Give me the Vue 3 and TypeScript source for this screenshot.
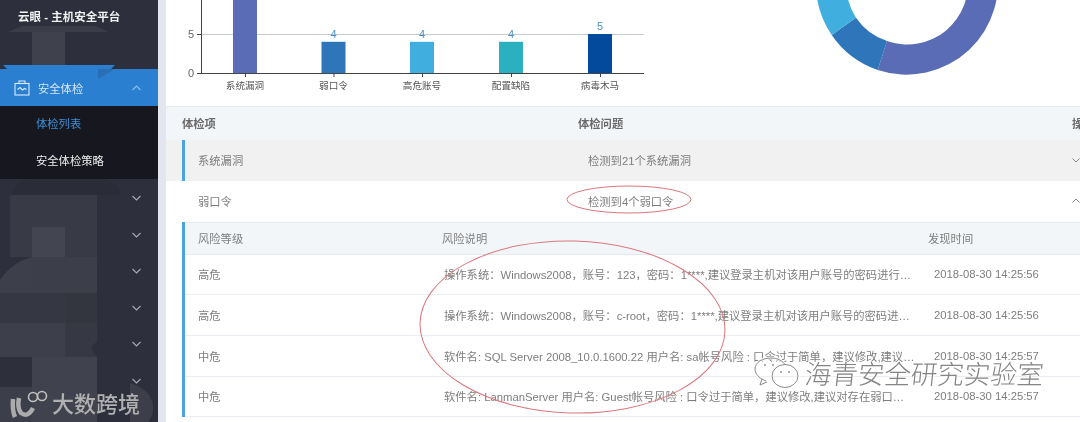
<template>
  <div class="page">
    <aside class="sidebar">
      <svg class="mosaic" width="158" height="422" viewBox="0 0 158 422" aria-hidden="true">
        <path d="M8 32 L22 26 H96 L108 32 Z" fill="#3a3c47" />
        <rect x="32" y="32" width="33" height="34" fill="#3f414c" />
        <path d="M3 65 H115 L111 69 H7 Z" fill="#2b7fd0" />
        <path d="M12 193 Q16 179 32 179 H102 Q116 180 120 193 V195 H12 Z" fill="#2a2c37" />
        <rect x="10" y="195" width="87" height="62" fill="#383a46" />
        <rect x="32" y="227" width="33" height="30" fill="#434551" />
        <path d="M0 280 Q12 262 32 257 V293 H0 Z" fill="#3d3f4a" />
        <rect x="32" y="257" width="65" height="36" fill="#3c3e4a" />
        <rect x="0" y="293" width="66" height="30" fill="#353743" />
        <rect x="66" y="293" width="31" height="30" fill="#33353f" />
        <rect x="0" y="323" width="65" height="34" fill="#3d3f4a" />
        <path d="M65 323 H97 V341 L91 348 L97 357 H65 Z" fill="#363843" />
        <rect x="0" y="357" width="32" height="30" fill="#2d2f3b" />
        <rect x="32" y="357" width="65" height="65" fill="#40424d" />
        <rect x="0" y="387" width="32" height="35" fill="#3c3e4a" />
        <path d="M130 383 Q153 390 153 408 Q153 416 148 422 H130 Z" fill="#3d3e49" />
      </svg>

      <div class="brand">云眼 - 主机安全平台</div>

      <div class="menu-active">
        <svg class="menu-icon" width="16" height="16" viewBox="0 0 16 16" fill="none" stroke="#d8ecfb" stroke-width="1.1">
          <rect x="1" y="3.5" width="14" height="11.5" />
          <path d="M5 3.5 V1 H11 V3.5" />
          <path d="M3.5 9.5 L6 7.5 L8.5 10 L10.5 8.5 L12.5 9.5" />
        </svg>
        <span>安全体检</span>
        <svg class="chevron" width="9" height="6" viewBox="0 0 9 6" fill="none" stroke="#8fbde8" stroke-width="1.1">
          <path d="M0.5 5 L4.5 1 L8.5 5" />
        </svg>
      </div>

      <div class="submenu">
        <div class="sub-item sub-item-on">体检列表</div>
        <div class="sub-item">安全体检策略</div>
      </div>

      <div v-for="n in 6" :key="n" class="menu-closed">
        <svg class="chevron" width="9" height="6" viewBox="0 0 9 6" fill="none" stroke="#a9abb3" stroke-width="1.1">
          <path d="M0.5 1 L4.5 5 L8.5 1" />
        </svg>
      </div>
    </aside>

    <main class="content">
      <section class="chart-card">
        <svg class="chart" width="914" height="106" viewBox="166 0 914 106">
          <line x1="201" y1="34.5" x2="644" y2="34.5" stroke="#c8cad2" />
          <line x1="201" y1="73.5" x2="644" y2="73.5" stroke="#444" />
          <line x1="201.5" y1="0" x2="201.5" y2="74" stroke="#444" />
          <line x1="197" y1="34.5" x2="201" y2="34.5" stroke="#444" />
          <line x1="197" y1="73.5" x2="201" y2="73.5" stroke="#444" />
          <text x="191" y="38" class="axis-num">5</text>
          <text x="191" y="77" class="axis-num">0</text>
          <g v-for="bar in bars" :key="bar.name">
            <rect
              :x="bar.x - 12"
              :y="73 - bar.value * 7.8"
              width="24"
              :height="bar.value * 7.8"
              :fill="bar.color"
            />
            <line :x1="bar.x + 0.5" y1="73" :x2="bar.x + 0.5" y2="77" stroke="#444" />
            <text v-if="bar.value < 10" :x="bar.x" :y="69 - bar.value * 7.8" class="bar-value">{{ bar.value }}</text>
            <text :x="bar.x" y="88.5" class="bar-name">{{ bar.name }}</text>
          </g>
          <path d="M995 -40 A91.5 91.5 0 0 1 877.7 70 L887 41 A60.5 60.5 0 0 0 967 -26 Z" fill="#5a6cb5" />
          <path d="M877.7 70 A91.5 91.5 0 0 1 831.7 35 L856 17.7 A60.5 60.5 0 0 0 887 41 Z" fill="#2e75ba" />
          <path d="M831.7 35 A91.5 91.5 0 0 1 816 -20 L846.5 -20 A60.5 60.5 0 0 0 856 17.7 Z" fill="#40aede" />
        </svg>
      </section>

      <div class="head-row">
        <span>体检项</span>
        <span>体检问题</span>
        <span>操作</span>
      </div>

      <div class="check-row check-row-open">
        <span>系统漏洞</span>
        <span>检测到21个系统漏洞</span>
        <svg width="8" height="5" viewBox="0 0 8 5" fill="none" stroke="#888" stroke-width="1">
          <path d="M0.5 0.5 L4 4 L7.5 0.5" />
        </svg>
      </div>
      <div class="check-row">
        <span>弱口令</span>
        <span>检测到4个弱口令</span>
        <svg width="8" height="5" viewBox="0 0 8 5" fill="none" stroke="#888" stroke-width="1">
          <path d="M0.5 4.5 L4 1 L7.5 4.5" />
        </svg>
      </div>

      <div class="risk-table">
        <div class="risk-head">
          <span>风险等级</span>
          <span>风险说明</span>
          <span>发现时间</span>
        </div>
        <div v-for="risk in risks" :key="risk.desc" class="risk-row">
          <span>{{ risk.level }}</span>
          <span class="risk-desc">{{ risk.desc }}</span>
          <span>{{ risk.time }}</span>
        </div>
      </div>
    </main>

    <svg class="marks" width="1080" height="422" viewBox="0 0 1080 422" aria-hidden="true">
      <ellipse cx="629" cy="199.5" rx="62" ry="13.5" fill="none" stroke="#d9777d" />
      <ellipse cx="572.5" cy="327" rx="152.5" ry="86" fill="none" stroke="#d9777d" transform="rotate(1.5 572.5 327)" />
      <g fill="none" stroke="#fff" stroke-width="3" opacity="0.8">
        <path d="M766 381 C758 378 755 373 755 369 C755 362 763 358 771 358 C778 358 783 361 785 365" />
        <ellipse cx="785" cy="376" rx="13" ry="11.5" />
      </g>
      <g fill="none" stroke="#8b8b8b" stroke-width="1">
        <path d="M766 381 C758 378 755 373 755 369 C755 362 763 358 771 358 C778 358 783 361 785 365" />
        <path d="M762 379 L760 385 L767 382" />
        <ellipse cx="785" cy="376" rx="13" ry="11.5" />
      </g>
      <g fill="#8b8b8b">
        <circle cx="781" cy="372" r="0.9" />
        <circle cx="789" cy="372" r="0.9" />
        <circle cx="765" cy="365" r="0.9" />
        <circle cx="773" cy="365" r="0.9" />
      </g>
      <path d="M13 399 Q12 410 15 417 M19 398 Q17 408 21 413 Q28 418 33 408" fill="none" stroke="#ababab" stroke-width="4.5" />
      <circle cx="33" cy="397" r="4.5" fill="none" stroke="#c0c0c0" stroke-width="1.6" />
      <circle cx="42" cy="396" r="4.5" fill="none" stroke="#c0c0c0" stroke-width="1.6" />
    </svg>
    <div class="mark-left">大数跨境</div>
    <div class="mark-right">海青安全研究实验室</div>
  </div>
</template>

<script setup lang="ts">
interface Bar {
  name: string;
  value: number;
  x: number;
  color: string;
}

interface Risk {
  level: string;
  desc: string;
  time: string;
}

const bars: Bar[] = [
  { name: "系统漏洞", value: 21, x: 245, color: "#5a6cb5" },
  { name: "弱口令", value: 4, x: 333.5, color: "#2e75ba" },
  { name: "高危账号", value: 4, x: 422, color: "#40aede" },
  { name: "配置缺陷", value: 4, x: 511, color: "#2ab0bf" },
  { name: "病毒木马", value: 5, x: 600, color: "#034a9d" },
];

const risks: Risk[] = [
  {
    level: "高危",
    desc: "操作系统：Windows2008，账号：123，密码：1****,建议登录主机对该用户账号的密码进行修改，提高密码强度",
    time: "2018-08-30 14:25:56",
  },
  {
    level: "高危",
    desc: "操作系统：Windows2008，账号：c-root，密码：1****,建议登录主机对该用户账号的密码进行修改，提高密码强度",
    time: "2018-08-30 14:25:56",
  },
  {
    level: "中危",
    desc: "软件名: SQL Server 2008_10.0.1600.22 用户名: sa帐号风险 : 口令过于简单，建议修改,建议对存在弱口令的账号进行处理",
    time: "2018-08-30 14:25:57",
  },
  {
    level: "中危",
    desc: "软件名: LanmanServer 用户名: Guest帐号风险 : 口令过于简单，建议修改,建议对存在弱口令的账号进行处理",
    time: "2018-08-30 14:25:57",
  },
];
</script>

<style>
html,
body {
  margin: 0;
  overflow: hidden;
  background: #fff;
}
</style>

<style scoped>
.page {
  position: relative;
  display: flex;
  width: 1080px;
  height: 422px;
  overflow: hidden;
  font-family: "Liberation Sans", "Noto Sans CJK SC", sans-serif;
  font-size: 11.3px;
  color: #7e7e7e;
  filter: blur(0.35px);
}

.sidebar {
  position: relative;
  flex: 0 0 158px;
  background: #2d303c;
  border-right: 8px solid #e3e6ee;
}

.mosaic {
  position: absolute;
  left: 0;
  top: 0;
}

.brand {
  position: relative;
  height: 69px;
  box-sizing: border-box;
  padding: 9px 0 0 18px;
  line-height: 16px;
  font-size: 11.5px;
  font-weight: 700;
  color: #f2f2f2;
}

.menu-active {
  position: relative;
  display: flex;
  align-items: center;
  height: 37px;
  padding-left: 14px;
  color: #d3e7f8;
  background: #2b7fd0;
}

.menu-active::after {
  content: "";
  position: absolute;
  left: 98px;
  top: 0;
  width: 17px;
  height: 10px;
  background: #2a6fb4;
  clip-path: polygon(0 0, 100% 0, 0 100%);
}

.menu-icon {
  margin-right: 8px;
}

.chevron {
  position: absolute;
  left: 132px;
  top: 16px;
}

.submenu {
  position: relative;
  height: 73px;
  background: #17181f;
}

.sub-item {
  height: 36.5px;
  box-sizing: border-box;
  padding-left: 36px;
  line-height: 36px;
  color: #ececec;
}

.sub-item-on {
  color: #3b8fd8;
}

.menu-closed {
  position: relative;
  height: 36.5px;
}

.content {
  flex: 1;
  min-width: 0;
  background: #fff;
}

.chart-card {
  height: 106px;
  border-bottom: 1px solid #e6e9ee;
}

.chart {
  display: block;
}

.axis-num {
  font-size: 11px;
  fill: #666;
  text-anchor: middle;
}

.bar-value {
  font-size: 11px;
  fill: #4a90c8;
  text-anchor: middle;
}

.bar-name {
  font-size: 9.6px;
  fill: #555;
  text-anchor: middle;
}

.head-row {
  display: grid;
  grid-template-columns: 396px 494px 100px;
  align-items: center;
  height: 31px;
  padding: 0 0 2px 16px;
  font-weight: 700;
  color: #6a6a6a;
  background: #f3f6f9;
  white-space: nowrap;
}

.check-row {
  display: grid;
  grid-template-columns: 390px 484px 10px;
  align-items: center;
  height: 39px;
  margin-left: 16px;
  padding: 0 0 1px 16px;
  white-space: nowrap;
}

.check-row-open {
  position: relative;
  height: 40px;
  margin-left: 0;
  padding-left: 32px;
  background: #f1f1f1;
}

.check-row-open::before {
  content: "";
  position: absolute;
  left: 16px;
  top: 0;
  bottom: 0;
  width: 3px;
  background: #4aa3e0;
}

.risk-table {
  margin: 0.5px 0 0 16px;
  border-left: 3px solid #4aa3e0;
}

.risk-head {
  display: grid;
  grid-template-columns: 244px 486px 150px;
  align-items: center;
  height: 30px;
  padding: 0 0 1px 13px;
  background: #f3f6f9;
  border-top: 1px solid #e6e9ee;
  border-bottom: 1px solid #e6e9ee;
  white-space: nowrap;
}

.risk-row {
  display: grid;
  grid-template-columns: 246px 490px 150px;
  align-items: center;
  height: 39.7px;
  padding-left: 13px;
  border-bottom: 1px solid #eaeef3;
  white-space: nowrap;
}

.risk-desc {
  overflow: hidden;
  padding-right: 19px;
  text-overflow: ellipsis;
}

.marks {
  position: absolute;
  left: 0;
  top: 0;
  pointer-events: none;
}

.mark-left {
  position: absolute;
  left: 52px;
  top: 391px;
  font-size: 22px;
  line-height: 28px;
  font-weight: 500;
  color: #b0b0b0;
}

.mark-right {
  position: absolute;
  left: 805px;
  top: 358px;
  font-size: 26.5px;
  line-height: 34px;
  font-weight: 300;
  color: #858585;
  white-space: nowrap;
  transform: skewX(-6deg);
  text-shadow: 0 0 2px #fff, 0 0 2px #fff, 0 0 2px #fff;
}
</style>
